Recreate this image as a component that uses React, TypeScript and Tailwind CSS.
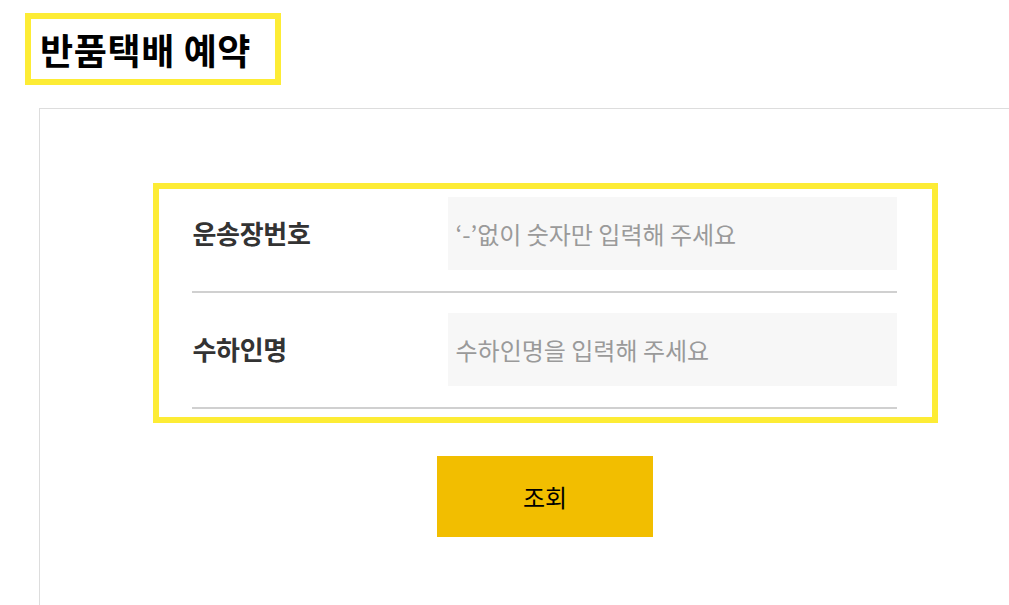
import React from "react";

const font = { fontFamily: '"Noto Sans CJK KR", "Noto Sans", sans-serif' };

export default function App() {
  return (
    <div
      className="w-[1009px] h-[605px] overflow-hidden bg-white relative"
      style={font}
    >
      <div className="pt-[13px] pl-[25px]">
        <div className="w-[256px] h-[72px] border-[6px] border-[#fdec35] flex items-center pl-[9px]">
          <h1 className="text-[36px] font-bold text-black leading-none tracking-[0.6px]">
            반품택배 예약
          </h1>
        </div>
      </div>
      <div className="mt-[23px] ml-[39px] w-[1012px] h-[600px] border border-[#dddddd] pt-[74px] flex flex-col items-center">
        <div className="w-[785px] border-[6px] border-[#fdec35] pl-[33px] pr-[35px] pt-[8px] pb-[8px]">
          <div className="flex items-center pb-[21px] border-b-2 border-[#d0d0d0]">
            <label className="w-[256px] pl-px pb-[3px] text-[26px] font-bold text-[#333] tracking-[-0.3px]">
              운송장번호
            </label>
            <input
              className="flex-1 h-[73px] bg-[#f7f7f7] px-[8px] text-[24px] text-[#333] placeholder:text-[#9a9a9a] outline-none"
              placeholder="‘-’없이 숫자만 입력해 주세요"
            />
          </div>
          <div className="flex items-center pt-[20px] pb-[21px] border-b-2 border-[#d0d0d0]">
            <label className="w-[256px] pl-px pb-[3px] text-[26px] font-bold text-[#333] tracking-[-0.3px]">
              수하인명
            </label>
            <input
              className="flex-1 h-[73px] bg-[#f7f7f7] px-[8px] text-[24px] text-[#333] placeholder:text-[#9a9a9a] outline-none"
              placeholder="수하인명을 입력해 주세요"
            />
          </div>
        </div>
        <button className="mt-[33px] w-[216px] h-[81px] bg-[#f2be00] text-[24px] text-black">
          조회
        </button>
      </div>
    </div>
  );
}
